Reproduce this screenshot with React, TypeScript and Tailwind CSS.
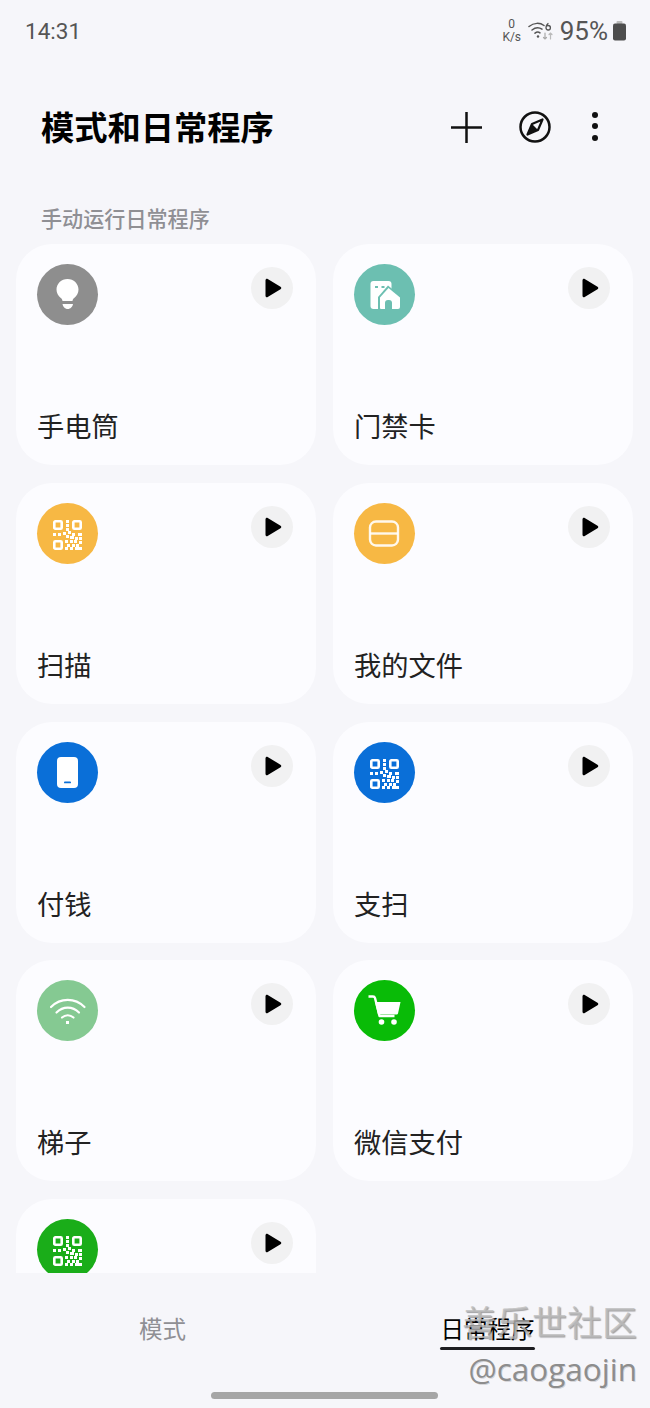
const items = [
  { label: "手电筒", color: "bg-[#8e8e8e]", icon: <BulbIcon /> },
  { label: "门禁卡", color: "bg-[#6cbfb1]", icon: <HomeIcon /> },
  { label: "扫描", color: "bg-[#f7b844]", icon: <QrIcon /> },
  { label: "我的文件", color: "bg-[#f7b844]", icon: <FileIcon /> },
  { label: "付钱", color: "bg-[#0a6fd8]", icon: <PhoneIcon /> },
  { label: "支扫", color: "bg-[#0a6fd8]", icon: <QrIcon /> },
  { label: "梯子", color: "bg-[#85c992]", icon: <WifiIcon /> },
  { label: "微信支付", color: "bg-[#09bb07]", icon: <CartIcon /> },
  { label: "", color: "bg-[#1aad19]", icon: <QrIcon /> },
];

function BulbIcon() {
  return (
    <svg viewBox="0 0 61 61" className="w-[61px] h-[61px]">
      <path d="M30.5 15c-6.200 0-11 4.700-11 10.600 0 3.600 1.700 6.500 4.300 8.400 1 .8 1.500 1.700 1.700 3h10c.2-1.300.7-2.200 1.700-3 2.600-1.900 4.300-4.800 4.300-8.400 0-5.900-4.800-10.600-11-10.600z" fill="#fff" />
      <path d="M25.500 40h10.500c-.4 2.800-2.600 5-5.300 5s-4.800-2.200-5.200-5z" fill="#fff" />
    </svg>
  );
}

function HomeIcon() {
  return (
    <svg viewBox="0 0 61 61" className="w-[61px] h-[61px]">
      <rect x="16.500" y="17" width="21" height="28" rx="3" fill="#fff" />
      <rect x="21" y="22" width="3" height="2" fill="#6cbfb1" />
      <rect x="27.500" y="22" width="3" height="2" fill="#6cbfb1" />
      <path d="M34 21.500 48 33v13.500H24V33z" fill="#6cbfb1" />
      <path d="M34.500 24 46 33.500V43a2 2 0 0 1-2 2H27a1 1 0 0 1-1-1v-10.500z" fill="#fff" />
      <path d="M31 45v-6a3 3 0 0 1 3-3h1a3 3 0 0 1 3 3v6z" fill="#6cbfb1" />
    </svg>
  );
}

function QrIcon() {
  // dots of the code, as x, y, w, h
  const dots = [
    [13, 0, 3, 3], [13, 4, 3, 3], [13, 8, 3, 3], [0, 13, 3, 3], [5, 13, 3, 3],
    [10, 12, 3, 3], [15, 11, 3, 3], [19, 13, 3, 3], [25, 13, 4, 3], [13, 15, 3, 3],
    [17, 16, 4, 3], [22, 17, 3, 3], [26, 17, 3, 3], [12, 20, 3, 3], [17, 20, 3, 3],
    [21, 20, 3, 3], [26, 21, 3, 3], [14, 24, 3, 3], [19, 24, 3, 3], [23, 24, 3, 3],
    [12, 27, 3, 3], [17, 27, 3, 3], [22, 27, 7, 3],
  ];
  return (
    <svg viewBox="0 0 61 61" className="w-[61px] h-[61px]">
      <g transform="translate(16 17)" fill="#fff">
        {dots.map((d, i) => (
          <rect key={i} x={d[0]} y={d[1]} width={d[2]} height={d[3]} />
        ))}
        <rect x="1.300" y="1.300" width="7.400" height="7.400" rx="1" fill="none" stroke="#fff" strokeWidth="2.600" />
        <rect x="20.300" y="1.300" width="7.400" height="7.400" rx="1" fill="none" stroke="#fff" strokeWidth="2.600" />
        <rect x="1.300" y="21.300" width="7.400" height="7.400" rx="1" fill="none" stroke="#fff" strokeWidth="2.600" />
      </g>
    </svg>
  );
}

function FileIcon() {
  return (
    <svg viewBox="0 0 61 61" className="w-[61px] h-[61px]" fill="none" stroke="#fff" strokeOpacity="0.9" strokeWidth="2.400">
      <rect x="16" y="18.500" width="28" height="24" rx="6" />
      <path d="M16 30.500h28" />
    </svg>
  );
}

function PhoneIcon() {
  return (
    <svg viewBox="0 0 61 61" className="w-[61px] h-[61px]">
      <rect x="20" y="15" width="21" height="31" rx="4" fill="#fff" />
      <rect x="27" y="39.500" width="7" height="1.800" rx="0.900" fill="#0a6fd8" />
    </svg>
  );
}

function WifiIcon() {
  return (
    <svg viewBox="0 0 61 61" className="w-[61px] h-[61px]" fill="none" stroke="#fff" strokeWidth="2.200" strokeLinecap="round">
      <path d="M14 27c9.500-9.500 24-9.500 33.500 0" />
      <path d="M19.500 32.500c6.500-6.500 16-6.500 22.500 0" />
      <path d="M25 37.500c3.500-3 8-3 11.500 0" />
      <rect x="29" y="41" width="3" height="3" fill="#fff" stroke="none" />
    </svg>
  );
}

function CartIcon() {
  return (
    <svg viewBox="0 0 61 61" className="w-[61px] h-[61px]" fill="#fff">
      <path d="M14.500 16.500h4.500c1 0 1.700.5 2 1.500l4.500 18h15" fill="none" stroke="#fff" strokeWidth="2.400" strokeLinejoin="round" />
      <path d="M21 22h25.500l-2.500 11.500c-.2.700-.7 1-1.300 1H24z" />
      <circle cx="27.500" cy="42" r="2.800" />
      <circle cx="40" cy="42" r="2.800" />
    </svg>
  );
}

function PlayButton() {
  return (
    <div className="w-[42px] h-[42px] mt-[3px] rounded-full bg-[#f1f1f2] flex items-center justify-center">
      <svg viewBox="0 0 42 42" className="w-[42px] h-[42px]">
        <path d="M14.500 13.200c0-1.300 1.200-1.900 2.200-1.300l12.800 7.800c1 .6 1 1.900 0 2.500l-12.800 7.800c-1 .6-2.200 0-2.200-1.300z" fill="#000" />
      </svg>
    </div>
  );
}

function Card({ label, color, icon }: { label: string; color: string; icon: React.ReactNode }) {
  return (
    <div className="h-[221px] rounded-[36px] bg-[#fcfcff] flex flex-col justify-between">
      <div className="flex items-start justify-between pt-[20px] pl-[21px] pr-[23px]">
        <div className={`w-[61px] h-[61px] rounded-full ${color}`}>{icon}</div>
        <PlayButton />
      </div>
      <div className="pl-[21px] pb-[21px] h-[59px] text-[27.25px] leading-[38px] text-[#222]">{label}</div>
    </div>
  );
}

function StatusIcons() {
  return (
    <div className="flex items-center text-[#555]">
      <div className="w-[20px] mr-[6px] flex flex-col items-center text-[12px] leading-[13px] font-['Roboto',sans-serif]">
        <span>0</span>
        <span>K/s</span>
      </div>
      <svg viewBox="0 0 26 20" className="w-[26px] h-[20px] mr-[6px]" fill="none" stroke="#555" strokeWidth="1.500" strokeLinecap="round">
        <path d="M1 5.500c5-4 11-4 15 -1" />
        <path d="M4 9c3.500-2.800 7-2.800 10 -.8" />
        <path d="M7 12.200c1.800-1.400 3.500-1.400 5 -.3" />
        <circle cx="10" cy="15.500" r="1.200" fill="#555" stroke="none" />
        <path d="M20 2.500c-1.500 1-2 2.500-2 4s1 2.500 2.200 2.500 2.200-1 2.200-2.300-1-2.200-2.200-2.200-2.200.8-2.200 2" strokeWidth="1.300" />
        <path d="M17 12v6M15.500 16.500l1.500 1.500 1.500-1.500" stroke="#aaa" strokeWidth="1.200" />
        <path d="M22.500 18v-6M21 13.500l1.500-1.500 1.500 1.500" stroke="#bbb" strokeWidth="1.200" />
      </svg>
      <span className="text-[26px] leading-[28px] font-['Roboto',sans-serif] mr-[5px]">95%</span>
      <svg viewBox="0 0 13 20" className="w-[13px] h-[20px]">
        <rect x="3.500" y="0" width="6" height="3" rx="1" fill="#bbb" />
        <rect x="0" y="2.500" width="13" height="17" rx="2" fill="#4d4d4d" />
      </svg>
    </div>
  );
}

export default function App() {
  return (
    <div className="relative w-[650px] h-[1408px] overflow-hidden bg-[#f6f6fa] font-['Noto_Sans_CJK_SC','Noto_Sans',sans-serif]">
      {/* status bar */}
      <div className="h-[62px] pl-[25px] pr-[24px] flex items-center justify-between">
        <span className="text-[22.5px] leading-[30px] text-[#555] font-['Roboto',sans-serif]">14:31</span>
        <StatusIcons />
      </div>

      {/* header */}
      <div className="h-[132px] pl-[41px] pr-[52px] pb-[2px] flex items-center justify-between">
        <h1 className="mb-[2px] text-[33.25px] leading-[44px] font-bold text-black">模式和日常程序</h1>
        <div className="flex items-center">
          <svg viewBox="0 0 31 31" className="w-[31px] h-[31px] mr-[37px]" stroke="#111" strokeWidth="2.500">
            <path d="M15.500 0v31M0 15.500h31" />
          </svg>
          <svg viewBox="0 0 32 32" className="w-[32px] h-[32px] mr-[41px]" fill="none" stroke="#111" strokeWidth="2.500">
            <circle cx="16" cy="16" r="14.500" />
            <path d="M23.500 8.500 19 19l-10.500 4.500L13 13z" strokeLinejoin="round" strokeWidth="2.200" />
            <path d="M8.500 23.500 13 13l6 6z" fill="#111" stroke="none" />
          </svg>
          <svg viewBox="0 0 6 30" className="w-[6px] h-[30px]" fill="#111">
            <circle cx="3" cy="3" r="3" />
            <circle cx="3" cy="14" r="3" />
            <circle cx="3" cy="26" r="3" />
          </svg>
        </div>
      </div>

      <div className="h-[50px] pl-[41px] pb-[2px] flex items-center text-[21.1px] leading-[28px] font-medium text-[#8f8f94]">
        手动运行日常程序
      </div>

      {/* routines list, cut off by the tab bar */}
      <div className="h-[1029px] overflow-hidden pl-[16px]">
        <div className="grid grid-cols-[300px_300px] gap-x-[17px] gap-y-[17.75px]">
          {items.map((item, i) => (
            <Card key={i} label={item.label} color={item.color} icon={item.icon} />
          ))}
        </div>
      </div>

      {/* tabs */}
      <div className="grid grid-cols-2 pt-[39px]">
        <div className="flex justify-center text-[23.5px] leading-[32px] text-[#8f8f94]">模式</div>
        <div className="flex justify-center">
          <div className="flex flex-col items-center text-[23.5px] leading-[32px] text-black">
            <span>日常程序</span>
            <div className="w-[95px] h-[3px] mt-[3px] rounded-full bg-[#1c1c20]" />
          </div>
        </div>
      </div>
      <div className="mt-[42px] ml-[211px] w-[227px] h-[7px] rounded-full bg-[#a6a6a6]" />

      {/* watermark */}
      <div className="absolute right-[13px] top-[1299px] flex flex-col items-end">
        <span className="text-[35px] leading-[44px] text-[#bdbdbd]/80 [text-shadow:1px_1px_1px_rgba(0,0,0,0.35)]">善乐世社区</span>
        <span className="mt-[7px] text-[31.5px] leading-[38px] text-[#8d8d8d] font-['Open_Sans',sans-serif] [text-shadow:1px_1px_0_rgba(0,0,0,0.15)]">@caogaojin</span>
      </div>
    </div>
  );
}
